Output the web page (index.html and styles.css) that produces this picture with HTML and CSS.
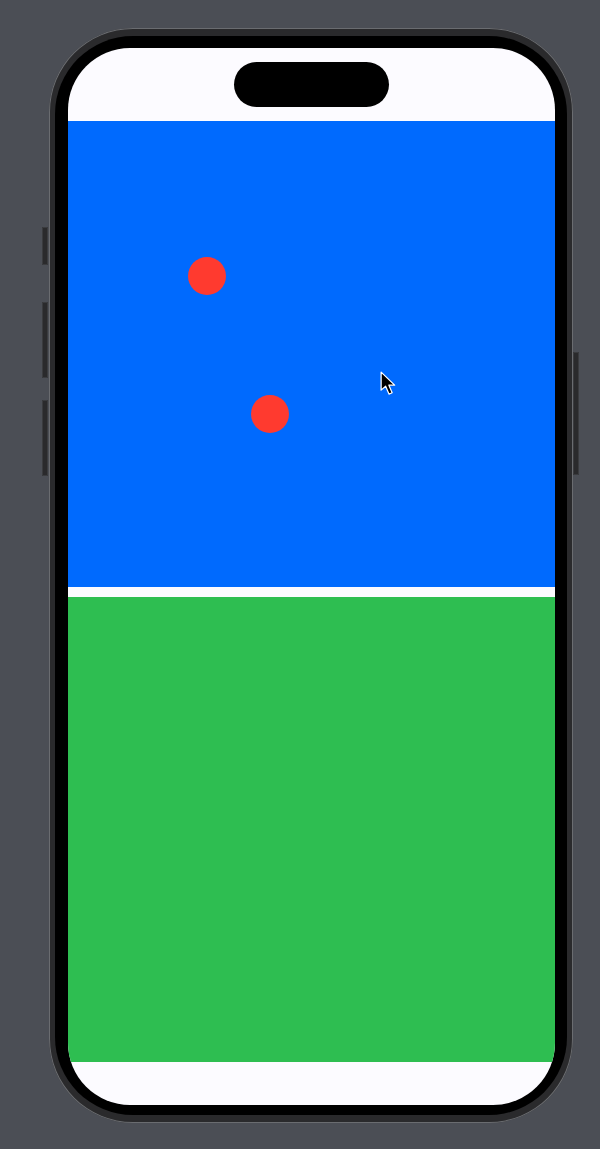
FILE: index.html
```html
<!DOCTYPE html>
<html>
<head>
<meta charset="utf-8">
<link rel="stylesheet" href="styles.css">
</head>
<body>
<div class="stage">
  <div class="btn btn-action"></div>
  <div class="btn btn-vol-up"></div>
  <div class="btn btn-vol-down"></div>
  <div class="btn btn-power"></div>
  <div class="phone">
    <div class="bezel">
      <div class="screen">
        <div class="top-area"><div class="island"></div></div>
        <div class="panel panel-blue">
          <div class="dot dot-1"></div>
          <div class="dot dot-2"></div>
          <svg class="cursor" width="18" height="27" viewBox="0 0 16 24">
            <path d="M1 1 L1 17 L5 13.5 L8 20.5 L10.8 19.3 L7.9 12.6 L13 12.6 Z" fill="#000" stroke="#fff" stroke-width="1.1" stroke-linejoin="round"/>
          </svg>
        </div>
        <div class="gap"></div>
        <div class="panel panel-green"></div>
        <div class="bottom-area"></div>
      </div>
    </div>
  </div>
</div>
</body>
</html>
```

FILE: styles.css
```css
html, body {
  margin: 0;
  padding: 0;
  background: #4b4e55;
  width: 600px;
  height: 1149px;
  overflow: hidden;
}

.stage {
  position: relative;
  padding: 28px 0 0 49px;
}

.phone {
  width: 524px;
  height: 1095px;
  box-sizing: border-box;
  padding: 8px 6px 8px 6px;
  border-radius: 84px;
  background: #2a2a2c;
  box-shadow: inset 0 0 0 1px #6a6c70;
}

.bezel {
  height: 100%;
  box-sizing: border-box;
  padding: 12px 12px 10px 13px;
  border-radius: 78px;
  background: #000;
}

.screen {
  position: relative;
  width: 487px;
  height: 1057px;
  border-radius: 62px;
  overflow: hidden;
  background: #fcfbff;
  display: flex;
  flex-direction: column;
}

.top-area {
  height: 73px;
  flex: none;
  display: flex;
  justify-content: center;
  padding-top: 14px;
  box-sizing: border-box;
}

.island {
  width: 155px;
  height: 45px;
  border-radius: 23px;
  background: #000;
}

.panel {
  position: relative;
  flex: none;
}

.panel-blue {
  height: 466px;
  background: #006afe;
}

.gap {
  height: 10px;
  flex: none;
}

.panel-green {
  height: 465px;
  background: #2ebe51;
}

.bottom-area {
  flex: 1;
}

.dot {
  position: absolute;
  width: 38px;
  height: 38px;
  border-radius: 50%;
  background: #ff3a2f;
}

.dot-1 { left: 120px; top: 136px; }
.dot-2 { left: 183px; top: 274px; }

.cursor {
  position: absolute;
  left: 312px;
  top: 250px;
}

.btn {
  position: absolute;
  background: #2a2a2c;
  box-shadow: inset 0 0 0 1px #3a3b3e;
  border-radius: 1px;
}

.btn-action { left: 42px; top: 227px; width: 6px; height: 38px; }
.btn-vol-up { left: 42px; top: 302px; width: 6px; height: 76px; }
.btn-vol-down { left: 42px; top: 400px; width: 6px; height: 76px; }
.btn-power { left: 573px; top: 352px; width: 6px; height: 123px; }
```
